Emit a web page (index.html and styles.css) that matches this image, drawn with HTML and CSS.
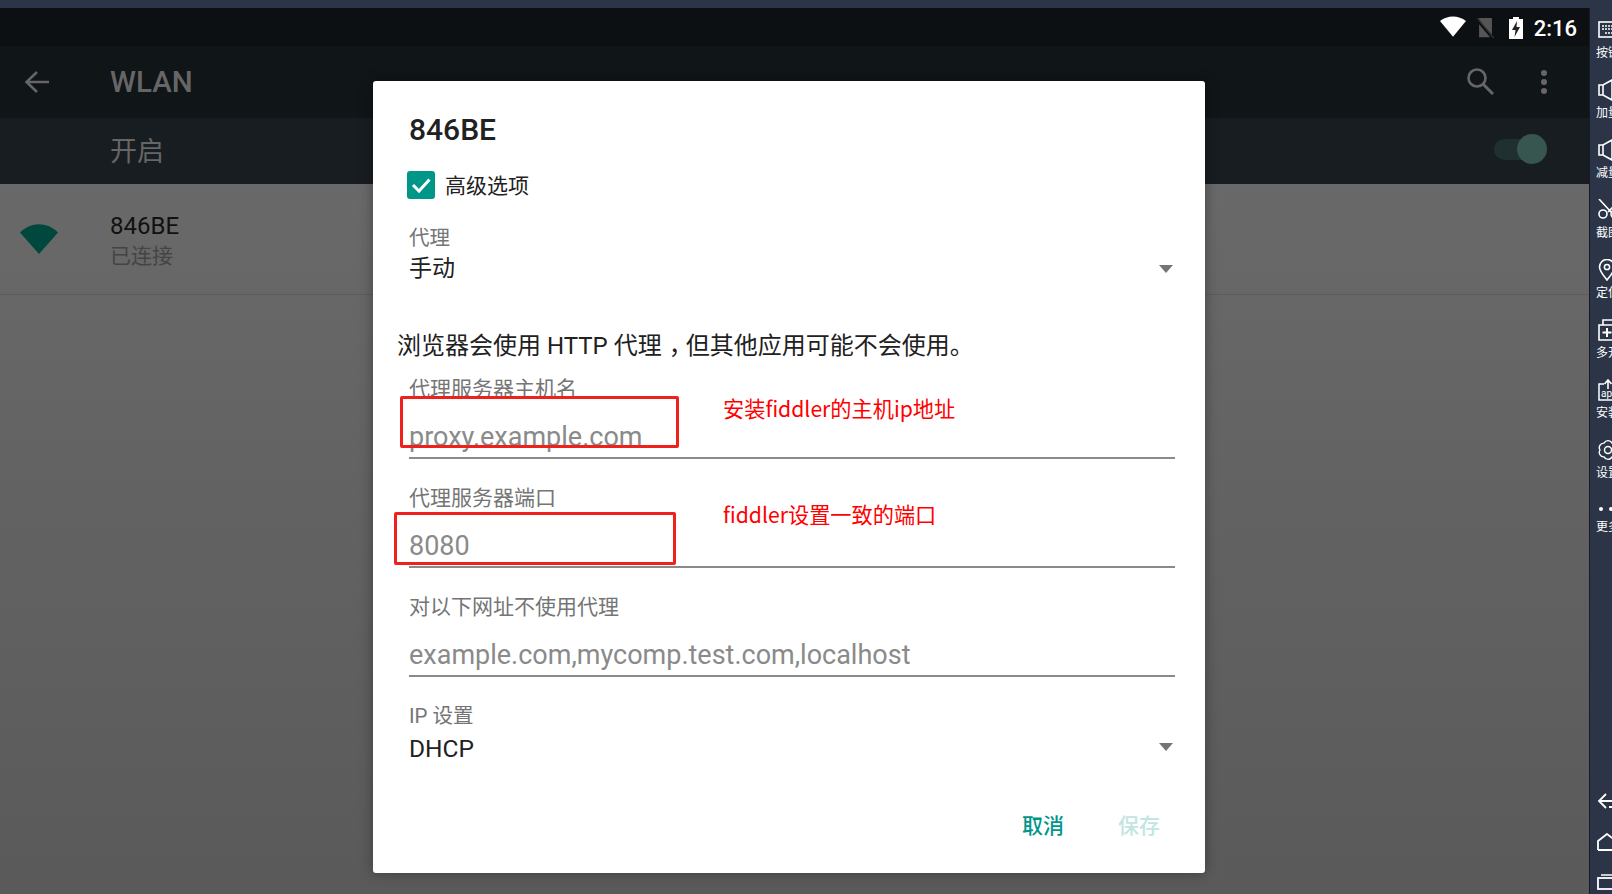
FILE: index.html
```html
<!DOCTYPE html>
<html lang="zh">
<head>
    <meta charset="UTF-8">
    <title>WLAN</title>
    <link rel="stylesheet" href="styles.css">
</head>
<body>
    <div class="top-strip"></div>
    <div class="screen">
        <div class="android">
            <!-- status bar -->
            <div class="status-bar">
                <svg class="st-wifi" width="26" height="21" viewBox="0 0 28 22"><path d="M0 5 C8 -1.500 20 -1.500 28 5 L14 22 Z" fill="#fff"/></svg>
                <svg class="st-sim" width="19" height="22" viewBox="0 0 20 24"><path d="M3 1 H17 V19 L3 4 Z M3 8 L15 22 H3 Z" fill="#555"/><path d="M1 1 L19 23" stroke="#333" stroke-width="1.500"/></svg>
                <svg class="st-batt" width="14" height="22" viewBox="0 0 14 22"><path d="M4 0 H10 V2 H14 V22 H0 V2 H4 Z" fill="#fff"/><path d="M8 4 L3 13 H6.500 L5.500 20 L11 10 H7.500 Z" fill="#222"/></svg>
                <span class="st-time">2:16</span>
            </div>
            <!-- app bar -->
            <div class="app-bar">
                <svg class="back-icon" width="26" height="24" viewBox="0 0 26 24"><path d="M25 12 H3 M13 2 L2.500 12 L13 22" fill="none" stroke="#666" stroke-width="2.500"/></svg>
                <span class="app-title">WLAN</span>
                <svg class="search-icon" width="28" height="28" viewBox="0 0 28 28"><circle cx="11" cy="11" r="8.500" fill="none" stroke="#666" stroke-width="2.600"/><path d="M17 17 L27 27" stroke="#666" stroke-width="3"/></svg>
                <div class="more-dots"><i></i><i></i><i></i></div>
            </div>
            <!-- switch row -->
            <div class="switch-bar">
                <span class="switch-text">开启</span>
                <div class="toggle"><div class="toggle-thumb"></div></div>
            </div>
            <!-- network list -->
            <div class="wifi-list">
                <div class="wifi-row">
                    <svg class="wifi-icon" width="38" height="30" viewBox="0 0 38 30"><path d="M0 8.500 C11 -2.500 27 -2.500 38 8.500 L19 30 Z" fill="#00473d"/></svg>
                    <div>
                        <div class="wifi-name">846BE</div>
                        <div class="wifi-state">已连接</div>
                    </div>
                </div>
            </div>
        </div>

        <div class="sidebar">
            <div class="side-top">
                <div class="side-item">
                    <svg width="24" height="18" viewBox="0 0 24 18"><rect x="1" y="1" width="22" height="15" fill="none" stroke="#fff" stroke-width="1.600"/><path d="M4 5 H20 M4 8 H20 M7 12 H17" stroke="#fff" stroke-width="1.500" stroke-dasharray="2 1"/></svg>
                    <span>按键</span>
                </div>
                <div class="side-item">
                    <svg width="24" height="22" viewBox="0 0 24 22"><path d="M1 6 H5 L14 1 V21 L5 16 H1 Z M5 6 V16" fill="none" stroke="#fff" stroke-width="1.600"/></svg>
                    <span>加量</span>
                </div>
                <div class="side-item">
                    <svg width="24" height="22" viewBox="0 0 24 22"><path d="M1 6 H5 L14 1 V21 L5 16 H1 Z M5 6 V16" fill="none" stroke="#fff" stroke-width="1.600"/></svg>
                    <span>减量</span>
                </div>
                <div class="side-item">
                    <svg width="24" height="22" viewBox="0 0 24 22"><path d="M1 0 L13 13 M23 0 L10 13" stroke="#fff" stroke-width="1.600"/><circle cx="5" cy="15" r="4" fill="none" stroke="#fff" stroke-width="1.600"/><circle cx="17" cy="15" r="4" fill="none" stroke="#fff" stroke-width="1.600"/></svg>
                    <span>截图</span>
                </div>
                <div class="side-item">
                    <svg width="24" height="22" viewBox="0 0 24 22"><path d="M9 21 C5 16 1.500 12 1.500 8 A7.500 7.500 0 0 1 16.500 8 C16.500 12 13 16 9 21 Z" fill="none" stroke="#fff" stroke-width="1.600"/><circle cx="9" cy="8" r="2.600" fill="none" stroke="#fff" stroke-width="1.500"/></svg>
                    <span>定位</span>
                </div>
                <div class="side-item">
                    <svg width="24" height="22" viewBox="0 0 24 22"><path d="M1 6 H23 V21 H1 Z M5 6 V1 H19 V6" fill="none" stroke="#fff" stroke-width="1.600"/><path d="M9 9 V18 M4.500 13.500 H13.500" stroke="#fff" stroke-width="2"/></svg>
                    <span>多开</span>
                </div>
                <div class="side-item">
                    <svg width="24" height="22" viewBox="0 0 24 22"><path d="M6 5 H1 V21 H23 V5 H14" fill="none" stroke="#fff" stroke-width="1.500"/><path d="M10 10 V2 M6.500 5 L10 1 L13.500 5" fill="none" stroke="#fff" stroke-width="1.600"/><text x="3" y="18" font-size="10" fill="#fff">apk</text></svg>
                    <span>安装</span>
                </div>
                <div class="side-item">
                    <svg width="24" height="22" viewBox="0 0 24 22"><path d="M18 11 A4.500 4.500 0 0 1 14 17.900 A4.500 4.500 0 0 1 6 17.900 A4.500 4.500 0 0 1 2 11 A4.500 4.500 0 0 1 6 4.100 A4.500 4.500 0 0 1 14 4.100 A4.500 4.500 0 0 1 18 11 Z" fill="none" stroke="#fff" stroke-width="1.400"/><circle cx="10" cy="11" r="3.500" fill="none" stroke="#fff" stroke-width="1.500"/></svg>
                    <span>设置</span>
                </div>
                <div class="side-item more">
                    <svg width="24" height="14" viewBox="0 0 24 14"><circle cx="3" cy="6" r="2" fill="#fff"/><circle cx="13" cy="6" r="2" fill="#fff"/></svg>
                    <span>更多</span>
                </div>
            </div>
            <div class="side-nav">
                <svg width="24" height="18" viewBox="0 0 24 18"><path d="M24 9 H2 M9 2 L2 9 L9 16 M12 15 H24" fill="none" stroke="#fff" stroke-width="1.800"/></svg>
                <svg width="24" height="18" viewBox="0 0 24 18"><path d="M1 17 V8 L10 1 L19 8 M1 17 H24" fill="none" stroke="#fff" stroke-width="1.800"/></svg>
                <svg width="24" height="16" viewBox="0 0 24 16"><rect x="1" y="4" width="23" height="11" fill="none" stroke="#fff" stroke-width="1.800"/><path d="M4 1 H24" stroke="#fff" stroke-width="1.500"/></svg>
            </div>
        </div>
    </div>

    <!-- proxy dialog -->
    <div class="dialog">
        <div class="dlg-title">846BE</div>
        <div class="check-row">
            <div class="checkbox"><svg width="28" height="28" viewBox="0 0 28 28"><path d="M6 14 L12 20 L22.500 8.500" fill="none" stroke="#fff" stroke-width="3"/></svg></div>
            <span class="check-text">高级选项</span>
        </div>
        <div class="select-label first">代理</div>
        <div class="select-value">手动<i class="caret"></i></div>
        <div class="dlg-msg">浏览器会使用 HTTP 代理<span class="comma">，</span>但其他应用可能不会使用。</div>
        <div class="field first">
            <div class="field-label">代理服务器主机名</div>
            <div class="field-input">proxy.example.com</div>
        </div>
        <div class="field">
            <div class="field-label">代理服务器端口</div>
            <div class="field-input">8080</div>
        </div>
        <div class="field">
            <div class="field-label">对以下网址不使用代理</div>
            <div class="field-input">example.com,mycomp.test.com,localhost</div>
        </div>
        <div class="select-label ip">IP 设置</div>
        <div class="select-value dhcp">DHCP<i class="caret"></i></div>
        <div class="dlg-actions">
            <span class="btn-cancel">取消</span>
            <span class="btn-save">保存</span>
        </div>
    </div>

    <!-- red annotations on top of the screenshot -->
    <div class="mark mark-host"></div>
    <div class="mark mark-port"></div>
    <div class="note note-host">安装fiddler的主机ip地址</div>
    <div class="note note-port">fiddler设置一致的端口</div>
</body>
</html>
```

FILE: styles.css
```css
* {
    box-sizing: border-box;
}

html, body {
    margin: 0;
    height: 894px;
    overflow: hidden;
}

body {
    position: relative;
    font-family: Roboto, "Noto Sans CJK SC", sans-serif;
    background-color: #2b3547;
    display: flex;
    flex-direction: column;
}

.top-strip {
    height: 8px;
    background-color: #2b3547;
}

.screen {
    flex: 1;
    display: flex;
    min-height: 0;
}

.android {
    flex: 1;
    display: flex;
    flex-direction: column;
}

.status-bar {
    height: 38px;
    background-color: #0c1012;
    display: flex;
    align-items: center;
    justify-content: flex-end;
    padding-right: 12px;
    padding-top: 2px;
    color: #fff;
}

.st-wifi {
    margin-right: 10px;
    margin-bottom: 3px;
}

.st-sim {
    margin-right: 14px;
}

.st-batt {
    margin-right: 11px;
}

.st-time {
    font-size: 22px;
    font-weight: 500;
}

.app-bar {
    height: 72px;
    background-color: #101518;
    display: flex;
    align-items: center;
    padding-left: 24px;
}

.back-icon {
    margin-right: 60px;
}

.app-title {
    font-size: 29.500px;
    font-weight: 500;
    color: #666;
    flex: 1;
}

.search-icon {
    margin-right: 47px;
    margin-bottom: 2px;
}

.more-dots {
    display: flex;
    flex-direction: column;
    gap: 3px;
    margin-right: 42px;
}

.more-dots i {
    width: 6px;
    height: 6px;
    border-radius: 50%;
    background-color: #666;
}

.switch-bar {
    height: 66px;
    background-color: #181d21;
    display: flex;
    align-items: center;
    justify-content: space-between;
    padding: 0 42px 4px 110px;
}

.switch-text {
    font-size: 27px;
    color: #666;
}

.toggle {
    position: relative;
    width: 38px;
    height: 21px;
    border-radius: 11px;
    background-color: #203030;
    margin-right: 15px;
}

.toggle-thumb {
    position: absolute;
    top: -5px;
    right: -15px;
    width: 30px;
    height: 30px;
    border-radius: 50%;
    background-color: #36564f;
}

.wifi-list {
    flex: 1;
    background: linear-gradient(#696969, #5a5a5a);
}

.wifi-row {
    height: 111px;
    border-bottom: 1px solid #5b5b5b;
    display: flex;
    align-items: center;
    padding-left: 20px;
}

.wifi-icon {
    margin-right: 52px;
    margin-bottom: 1px;
}

.wifi-name {
    font-size: 24px;
    line-height: 30px;
    padding-top: 5px;
    color: #111;
}

.wifi-state {
    font-size: 21px;
    line-height: 31px;
    color: #444;
}

.sidebar {
    width: 23px;
    flex-shrink: 0;
    overflow: hidden;
    background-color: #2b3547;
    border-left: 1px solid #161c27;
    display: flex;
    flex-direction: column;
    justify-content: space-between;
    color: #fff;
}

.side-top {
    padding-top: 9px;
}

.side-item {
    width: 60px;
    height: 60px;
    padding-left: 6px;
    font-size: 12px;
    line-height: 14px;
    display: flex;
    flex-direction: column;
    gap: 5px;
    padding-top: 2px;
}

.side-item svg {
    margin-left: 2px;
    height: 22px;
    flex-shrink: 0;
}

.side-item.more svg {
    height: 14px;
    margin-top: 4px;
}

.side-item.more {
    gap: 3px;
}

.side-nav {
    display: flex;
    flex-direction: column;
    gap: 23px;
    padding: 0 0 4px 7px;
}

.dialog {
    position: absolute;
    left: 373px;
    top: 81px;
    width: 832px;
    height: 792px;
    background-color: #fff;
    border-radius: 3px;
    box-shadow: 0 0 14px rgba(0, 0, 0, 0.35);
    padding: 29px 30px 0 36px;
    color: #212121;
}

.dlg-title {
    font-size: 30px;
    font-weight: 500;
    line-height: 40px;
}

.check-row {
    margin-top: 17px;
    margin-left: -2px;
    height: 36px;
    display: flex;
    align-items: center;
    gap: 10px;
    font-size: 21px;
}

.check-text {
    padding-bottom: 2px;
}

.checkbox {
    width: 28px;
    height: 28px;
    border-radius: 3px;
    background-color: #009688;
}

.checkbox svg {
    display: block;
}

.select-label {
    font-size: 20.500px;
    line-height: 28px;
    color: #757575;
}

.select-label.first {
    margin-top: 21px;
}

.select-label.ip {
    margin-top: 25px;
}

.select-value {
    position: relative;
    font-size: 23px;
    line-height: 32px;
    height: 32px;
    padding-top: 1px;
}

.select-value.dhcp {
    font-size: 24.500px;
    line-height: 36px;
    height: 36px;
}

.caret {
    position: absolute;
    right: 2px;
    top: 13px;
    border-left: 7px solid transparent;
    border-right: 7px solid transparent;
    border-top: 8px solid #757575;
}

.dlg-msg {
    margin-top: 45px;
    margin-left: -12px;
    font-size: 24px;
    line-height: 34px;
}

/* half width comma with the space put on both sides */
.comma {
    font-feature-settings: "halt";
    padding: 0 5px 0 7px;
}

.field {
    margin-top: 25px;
}

.field.first {
    margin-top: 12px;
}

.field-label {
    font-size: 21px;
    line-height: 28px;
    color: #757575;
}

.field-input {
    margin-top: 14px;
    height: 42px;
    line-height: 40px;
    font-size: 27px;
    color: #8a8a8a;
    border-bottom: 2px solid #8a8a8a;
}

.dlg-actions {
    margin-top: 44px;
    display: flex;
    justify-content: flex-end;
    gap: 54px;
    padding-right: 15px;
    font-size: 21px;
    font-weight: 500;
    line-height: 32px;
}

.btn-cancel {
    color: #009688;
}

.btn-save {
    color: #c2e5e1;
}

.mark {
    position: absolute;
    border: 3px solid #f0201a;
    border-radius: 2px;
}

.mark-host {
    left: 400px;
    top: 396px;
    width: 279px;
    height: 52px;
}

.mark-port {
    left: 394px;
    top: 512px;
    width: 282px;
    height: 53px;
}

.note {
    position: absolute;
    left: 723px;
    font-family: "Noto Sans CJK SC", sans-serif;
    font-size: 21.200px;
    line-height: 28px;
    color: #ff0000;
    white-space: nowrap;
}

.note-host {
    top: 394px;
}

.note-port {
    top: 500px;
}
```
